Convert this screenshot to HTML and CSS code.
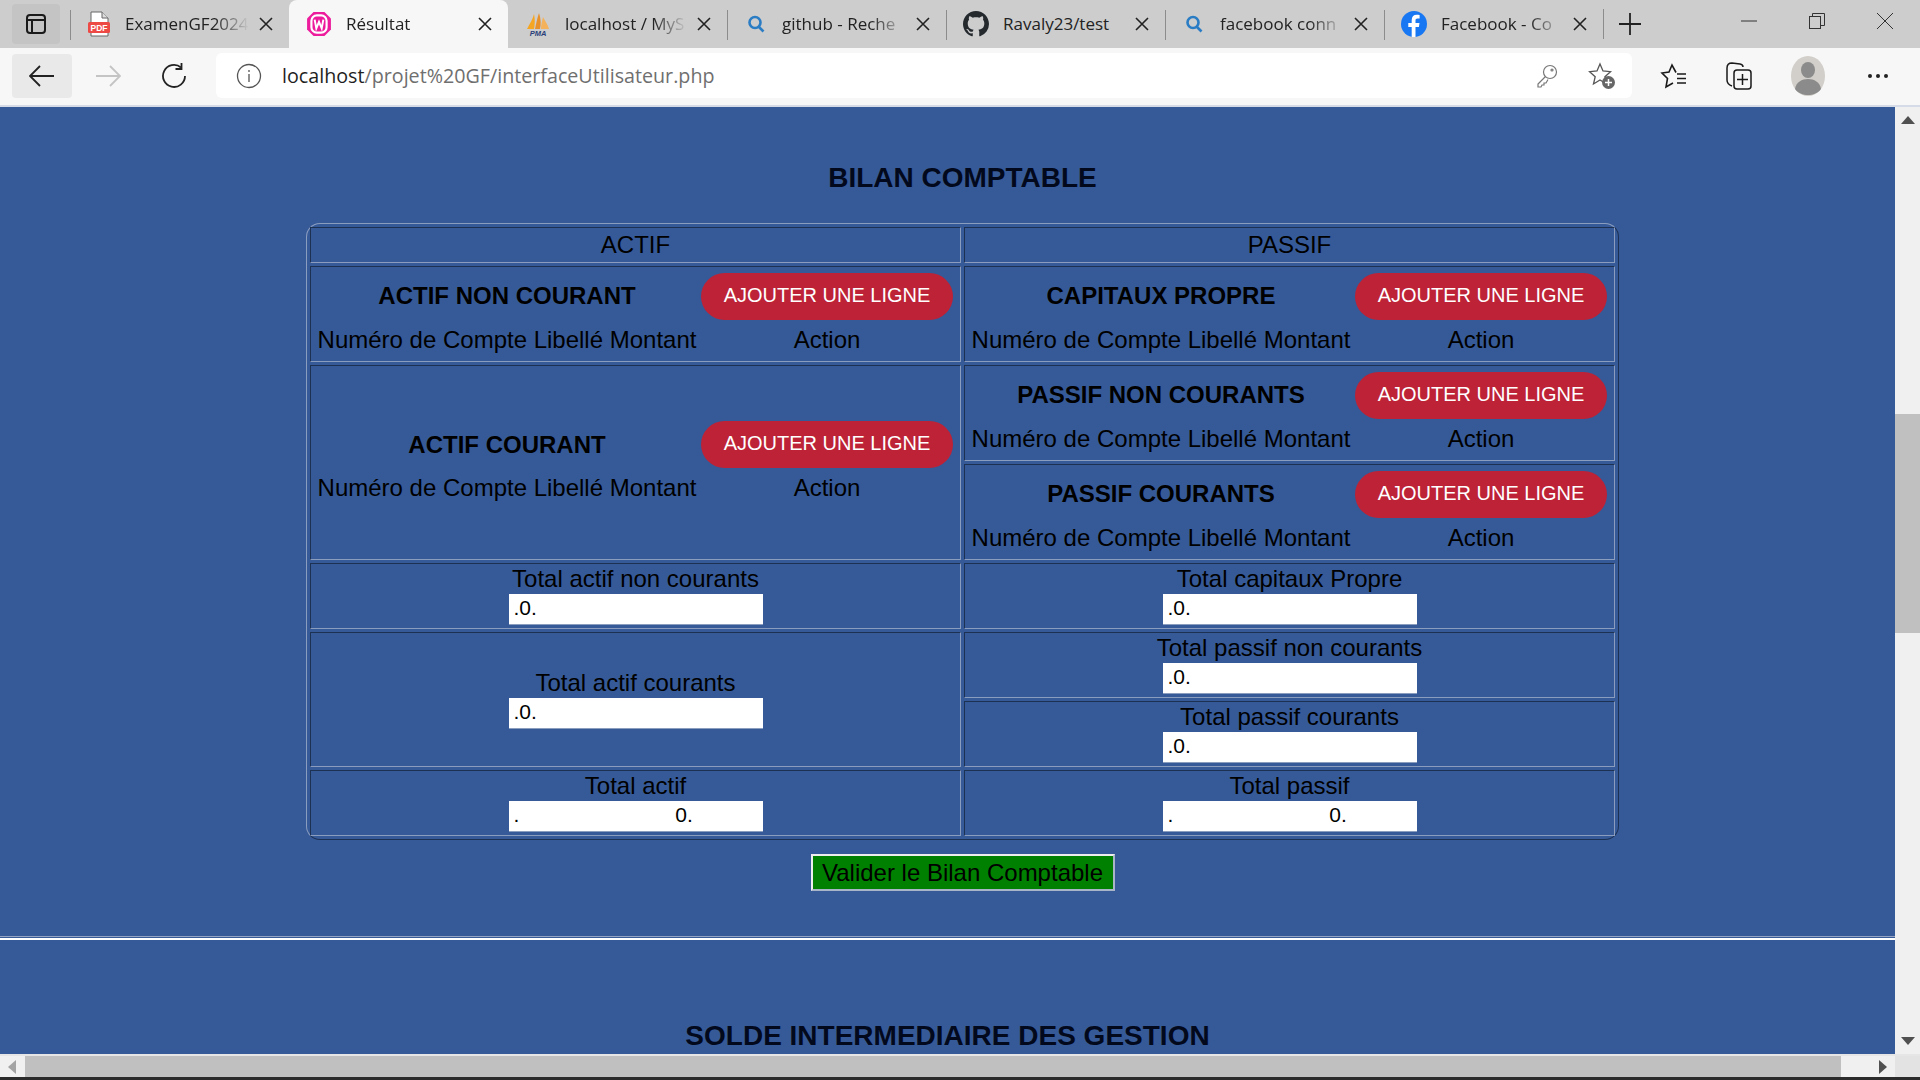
FILE: index.html
```html
<!DOCTYPE html>
<html lang="fr">
<head>
  <meta charset="UTF-8" />
  <title>Résultat</title>
  <link rel="stylesheet" href="styles.css">
</head>
<body>

  <!-- Tab strip -->
  <div class="tabstrip">
    <div class="side-btn">
      <svg width="24" height="24" viewBox="0 0 24 24" fill="none" stroke="#1a1a1a" stroke-width="2"><rect x="3" y="3" width="18" height="18" rx="3"/><path d="M3 8h18M8 8v13"/></svg>
    </div>
    <div class="tab sep">
      <svg class="fav" width="24" height="26" viewBox="0 0 24 26"><path d="M4 1h11l6 6v18H4z" fill="#fff" stroke="#666"/><path d="M15 1v6h6" fill="#ddd" stroke="#666"/><rect x="1" y="11" width="22" height="11" rx="1.5" fill="#ee4a45"/><text x="12" y="20" font-size="8.5" font-weight="700" fill="#fff" text-anchor="middle" font-family="Liberation Sans">PDF</text></svg>
      <span class="tab-title">ExamenGF2024</span>
      <svg class="close" width="14" height="14" viewBox="0 0 14 14" stroke="#222" stroke-width="1.6"><path d="M1 1l12 12M13 1L1 13"/></svg>
    </div>
    <div class="tab active">
      <svg class="fav" width="26" height="26" viewBox="0 0 24 24"><path d="M7 1h10l6 6v10l-6 6H7l-6-6V7z" fill="#ec1c9c"/><rect x="5" y="4" width="14" height="16" rx="5" fill="none" stroke="#fff" stroke-width="2"/><path d="M8 8l1.5 8L12 10l2.500 6L16 8" fill="none" stroke="#fff" stroke-width="1.800"/></svg>
      <span class="tab-title">Résultat</span>
      <svg class="close" width="14" height="14" viewBox="0 0 14 14" stroke="#222" stroke-width="1.6"><path d="M1 1l12 12M13 1L1 13"/></svg>
    </div>
    <div class="tab sep">
      <svg class="fav" width="26" height="26" viewBox="0 0 26 26"><path d="M2 18C5 12 8 8 9 3c1 5 1 10 0 15z" fill="#f5a623"/><path d="M10 18c1-5 2-10 4-16 2 6 2 11 1 16z" fill="#e8912a"/><path d="M16 18c0-4 1-8 2-12 2 4 5 8 6 12z" fill="#f3b25b"/><text x="13" y="25" font-size="7.500" font-weight="700" font-style="italic" fill="#2a3f7a" text-anchor="middle" font-family="Liberation Sans">PMA</text></svg>
      <span class="tab-title">localhost / MyS</span>
      <svg class="close" width="14" height="14" viewBox="0 0 14 14" stroke="#222" stroke-width="1.6"><path d="M1 1l12 12M13 1L1 13"/></svg>
    </div>
    <div class="tab sep">
      <svg class="fav" width="24" height="24" viewBox="0 0 24 24" fill="none" stroke="#2a7dc4" stroke-width="2.600"><circle cx="11" cy="10.500" r="5.500"/><path d="M15 15l4.500 4.500"/></svg>
      <span class="tab-title">github - Reche</span>
      <svg class="close" width="14" height="14" viewBox="0 0 14 14" stroke="#222" stroke-width="1.6"><path d="M1 1l12 12M13 1L1 13"/></svg>
    </div>
    <div class="tab sep">
      <svg class="fav" width="26" height="26" viewBox="0 0 16 16"><path fill="#24292e" d="M8 0C3.580 0 0 3.580 0 8c0 3.540 2.290 6.530 5.470 7.590.4.070.55-.17.55-.38 0-.19-.01-.82-.01-1.490-2.010.37-2.530-.49-2.690-.94-.09-.23-.48-.94-.82-1.130-.28-.15-.68-.52-.01-.53.63-.01 1.080.58 1.230.82.720 1.210 1.870.87 2.330.66.070-.52.280-.87.510-1.070-1.780-.2-3.640-.89-3.640-3.950 0-.87.310-1.590.82-2.150-.08-.2-.36-1.020.08-2.120 0 0 .67-.21 2.200.82.640-.18 1.320-.27 2-.27s1.360.09 2 .27c1.530-1.040 2.200-.82 2.200-.82.440 1.100.16 1.920.08 2.120.51.56.82 1.270.82 2.150 0 3.070-1.870 3.750-3.650 3.950.29.250.54.730.54 1.480 0 1.070-.01 1.930-.01 2.200 0 .21.150.46.550.38A8.010 8.010 0 0 0 16 8c0-4.420-3.580-8-8-8z"/></svg>
      <span class="tab-title no-fade">Ravaly23/test</span>
      <svg class="close" width="14" height="14" viewBox="0 0 14 14" stroke="#222" stroke-width="1.6"><path d="M1 1l12 12M13 1L1 13"/></svg>
    </div>
    <div class="tab sep">
      <svg class="fav" width="24" height="24" viewBox="0 0 24 24" fill="none" stroke="#2a7dc4" stroke-width="2.600"><circle cx="11" cy="10.500" r="5.500"/><path d="M15 15l4.500 4.500"/></svg>
      <span class="tab-title">facebook conn</span>
      <svg class="close" width="14" height="14" viewBox="0 0 14 14" stroke="#222" stroke-width="1.6"><path d="M1 1l12 12M13 1L1 13"/></svg>
    </div>
    <div class="tab sep">
      <svg class="fav" width="26" height="26" viewBox="0 0 26 26"><circle cx="13" cy="13" r="13" fill="#1877f2"/><path d="M14.500 26V16h3.400l.6-4h-4V9.500c0-1.200.5-2 2.100-2h2V4c-.9-.1-1.900-.2-2.900-.2-3 0-5 1.800-5 5.200v3H7.300v4h3.400v10z" fill="#fff"/></svg>
      <span class="tab-title">Facebook - Co</span>
      <svg class="close" width="14" height="14" viewBox="0 0 14 14" stroke="#222" stroke-width="1.6"><path d="M1 1l12 12M13 1L1 13"/></svg>
    </div>
    <div class="sep-last"></div>
    <svg class="new-tab" width="22" height="22" viewBox="0 0 22 22" stroke="#222" stroke-width="1.800"><path d="M11 0v22M0 11h22"/></svg>
    <div class="win-btns">
      <svg width="16" height="16" viewBox="0 0 16 16" stroke="#333" stroke-width="1"><path d="M0 8h16"/></svg>
      <svg width="16" height="16" viewBox="0 0 16 16" fill="none" stroke="#333" stroke-width="1"><rect x=".5" y="3.500" width="11" height="12"/><path d="M3.500 3.500V.5h12v12h-4"/></svg>
      <svg width="16" height="16" viewBox="0 0 16 16" stroke="#333" stroke-width="1"><path d="M0 0l16 16M16 0L0 16"/></svg>
    </div>
  </div>

  <!-- Address bar -->
  <div class="toolbar">
    <div class="nav-btn back">
      <svg width="26" height="24" viewBox="0 0 26 24" fill="none" stroke="#222" stroke-width="1.800"><path d="M1 12h24M11 2L1 12l10 10"/></svg>
    </div>
    <div class="nav-btn">
      <svg width="26" height="24" viewBox="0 0 26 24" fill="none" stroke="#c4c4c4" stroke-width="1.800"><path d="M25 12H1M15 2l10 10-10 10"/></svg>
    </div>
    <div class="nav-btn">
      <svg width="26" height="26" viewBox="0 0 26 26" fill="none" stroke="#222" stroke-width="1.800"><path d="M20 4.500A11 11 0 1 0 24 13"/><path d="M20.500 0v6h-6"/></svg>
    </div>
    <div class="omnibox">
      <svg width="26" height="26" viewBox="0 0 26 26" fill="none" stroke="#555" stroke-width="1.300"><circle cx="13" cy="13" r="11.500"/><path d="M13 11v8M13 7v2"/></svg>
      <div class="url"><span class="url-host">localhost</span>/projet%20GF/interfaceUtilisateur.php</div>
      <svg class="omni-key" width="22" height="24" viewBox="0 0 22 24" fill="none" stroke="#777" stroke-width="1.200"><circle cx="14" cy="8" r="6.500"/><path d="M9.500 12.500L2 20v3h3l1-2h2v-2h2l2-3.500"/><circle cx="16" cy="6" r="1"/></svg>
      <svg width="28" height="28" viewBox="0 0 28 28"><path d="M12 2l3 7 7.500.7-5.600 5 1.700 7.300L12 18l-6.500 4 1.700-7.300-5.600-5L9 9z" fill="none" stroke="#555" stroke-width="1.300"/><circle cx="20.500" cy="20.500" r="6.500" fill="#666"/><path d="M20.500 17v7M17 20.500h7" stroke="#fff" stroke-width="1.500"/></svg>
    </div>
    <div class="tool-icons">
      <svg width="28" height="28" viewBox="0 0 28 28" fill="none" stroke="#1a1a1a" stroke-width="1.600"><path d="M16 10.500L12 3L9 10L2 11L7.500 16.500L6 25L13 21"/><path d="M17 12h9M17 16.500h9M17 21h9"/></svg>
      <svg width="28" height="30" viewBox="0 0 28 30" fill="none" stroke="#1a1a1a" stroke-width="1.500"><path d="M7 25C4 24 2 22 2 19V7c0-3 2-5 5-5l8 1c2 .3 3 1.500 3 3"/><rect x="9" y="9" width="17" height="19" rx="3"/><path d="M17.500 13v11M12 18.500h11"/></svg>
      <svg class="avatar" width="34" height="40" viewBox="0 0 34 40"><ellipse cx="17" cy="20" rx="17" ry="20" fill="#d2cfca"/><ellipse cx="17" cy="14" rx="7" ry="8" fill="#8b8b8b"/><path d="M4 33c1-7 7-10 13-10s12 3 13 10c-3 4-8 6-13 6S7 37 4 33z" fill="#8b8b8b"/></svg>
      <svg width="22" height="6" viewBox="0 0 22 6" fill="#222"><circle cx="3" cy="3" r="2"/><circle cx="11" cy="3" r="2"/><circle cx="19" cy="3" r="2"/></svg>
    </div>
  </div>

  <!-- Page with its scrollbars -->
  <div class="window">
    <div class="viewport">
      <div class="bilan">
        <h2 class="bilan-title">BILAN COMPTABLE</h2>
        <table class="bilan-table">
          <tr class="row-head">
            <td>ACTIF</td>
            <td>PASSIF</td>
          </tr>
          <tr class="row-group">
            <td>
              <div class="group">
                <strong>ACTIF NON COURANT</strong>
                <a class="add-btn">AJOUTER UNE LIGNE</a>
                <span class="cols">Numéro de Compte Libellé Montant</span>
                <span class="cols">Action</span>
              </div>
            </td>
            <td>
              <div class="group">
                <strong>CAPITAUX PROPRE</strong>
                <a class="add-btn">AJOUTER UNE LIGNE</a>
                <span class="cols">Numéro de Compte Libellé Montant</span>
                <span class="cols">Action</span>
              </div>
            </td>
          </tr>
          <tr class="row-group">
            <td rowspan="2">
              <div class="group">
                <strong>ACTIF COURANT</strong>
                <a class="add-btn">AJOUTER UNE LIGNE</a>
                <span class="cols">Numéro de Compte Libellé Montant</span>
                <span class="cols">Action</span>
              </div>
            </td>
            <td>
              <div class="group">
                <strong>PASSIF NON COURANTS</strong>
                <a class="add-btn">AJOUTER UNE LIGNE</a>
                <span class="cols">Numéro de Compte Libellé Montant</span>
                <span class="cols">Action</span>
              </div>
            </td>
          </tr>
          <tr class="row-group">
            <td>
              <div class="group">
                <strong>PASSIF COURANTS</strong>
                <a class="add-btn">AJOUTER UNE LIGNE</a>
                <span class="cols">Numéro de Compte Libellé Montant</span>
                <span class="cols">Action</span>
              </div>
            </td>
          </tr>
          <tr class="row-total">
            <td>Total actif non courants<div class="amount">.0.</div></td>
            <td>Total capitaux Propre<div class="amount">.0.</div></td>
          </tr>
          <tr class="row-total">
            <td rowspan="2">Total actif courants<div class="amount">.0.</div></td>
            <td>Total passif non courants<div class="amount">.0.</div></td>
          </tr>
          <tr class="row-total">
            <td>Total passif courants<div class="amount">.0.</div></td>
          </tr>
          <tr class="row-total">
            <td>Total actif<div class="amount amount-split"><span>.</span><span>0.</span></div></td>
            <td>Total passif<div class="amount amount-split"><span>.</span><span>0.</span></div></td>
          </tr>
        </table>
        <div class="submit-row">
          <button class="submit-btn">Valider le Bilan Comptable</button>
        </div>
      </div>
      <hr class="divider">
      <h2 class="solde-title">SOLDE INTERMEDIAIRE DES GESTION</h2>
    </div>
    <div class="vscroll">
      <svg class="arrow-up" width="14" height="8" viewBox="0 0 14 8" fill="#505050"><path d="M7 0l7 8H0z"/></svg>
      <div class="vthumb"></div>
      <svg class="arrow-down" width="14" height="8" viewBox="0 0 14 8" fill="#505050"><path d="M7 8L0 0h14z"/></svg>
    </div>
  </div>
  <div class="hscroll">
    <svg width="8" height="14" viewBox="0 0 8 14" fill="#a3a3a3"><path d="M0 7l8-7v14z"/></svg>
    <div class="hthumb"></div>
    <svg width="8" height="14" viewBox="0 0 8 14" fill="#505050"><path d="M8 7L0 0v14z"/></svg>
    <div class="corner"></div>
  </div>
  <div class="desktop-edge"></div>

</body>
</html>
```

FILE: styles.css
```css
html, body {
  margin: 0;
  height: 100%;
  overflow: hidden;
}
body {
  display: flex;
  flex-direction: column;
  height: 1080px;
  font-family: "Liberation Sans", Arial, sans-serif;
  background: #365a98;
}

/* Tab strip */
.tabstrip {
  display: flex;
  align-items: center;
  height: 48px;
  flex: none;
  background: #cdcdcd;
  font-family: "Open Sans", "Noto Sans", sans-serif;
  font-size: 17px;
  color: #222;
}
.side-btn {
  display: flex;
  align-items: center;
  justify-content: center;
  width: 48px;
  height: 40px;
  margin-left: 12px;
  margin-right: 10px;
  background: #c4c4c4;
  border-radius: 4px;
}
.tab {
  display: flex;
  align-items: center;
  width: 219px;
  height: 48px;
  flex: none;
  box-sizing: border-box;
  padding-left: 17px;
  padding-right: 16px;
  position: relative;
}
.tab.sep::before, .sep-last {
  content: "";
  width: 1px;
  height: 30px;
  background: #8c8c8c;
}
.tab.sep::before {
  position: absolute;
  left: 0;
  top: 10px;
}
.tab.active + .tab.sep::before {
  display: none;
}
.tab.active {
  background: #f7f7f7;
  border-radius: 8px 8px 0 0;
}
.fav {
  flex: none;
}
.tab-title {
  flex: 1;
  min-width: 0;
  margin-left: 14px;
  margin-bottom: 2px;
  white-space: nowrap;
  -webkit-mask-image: linear-gradient(to right, #000 72%, transparent 100%);
  mask-image: linear-gradient(to right, #000 72%, transparent 100%);
}
.tab-title.no-fade {
  -webkit-mask-image: none;
  mask-image: none;
}
.close {
  flex: none;
  margin-left: 10px;
}
.sep-last {
  flex: none;
}
.new-tab {
  margin-left: 15px;
}
.win-btns {
  display: flex;
  gap: 52px;
  margin-left: auto;
  margin-right: 27px;
  margin-top: -6px;
}

/* Address bar */
.toolbar {
  display: flex;
  align-items: center;
  height: 59px;
  flex: none;
  box-sizing: border-box;
  padding: 1px 0 3px 12px;
  background: #f7f7f7;
  border-bottom: 2px solid #d5dbe7;
}
.nav-btn {
  display: flex;
  align-items: center;
  justify-content: center;
  width: 60px;
  height: 44px;
  margin-right: 6px;
}
.back {
  background: #e9e9e9;
  border-radius: 4px;
}
.omnibox {
  display: flex;
  align-items: center;
  gap: 20px;
  width: 1416px;
  height: 45px;
  margin-left: 6px;
  box-sizing: border-box;
  padding: 0 16px 0 20px;
  background: #fff;
  border-radius: 6px;
  flex: none;
}
.url {
  flex: 1;
  font-family: "Open Sans", "Noto Sans", sans-serif;
  font-size: 19.7px;
  color: #6f6f6f;
}
.url-host {
  color: #1f1f1f;
}
.omni-key {
  margin-right: 10px;
}
.tool-icons {
  display: flex;
  align-items: center;
  justify-content: space-between;
  flex: 1;
  padding: 0 31px 0 28px;
}
.avatar {
  margin-right: 5px;
}

/* Page area */
.viewport {
  flex: 1;
  min-width: 0;
  overflow: hidden;
  background: #365a98;
  color: #000;
}
.window {
  display: flex;
  flex: 1;
  min-height: 0;
}
.bilan {
  width: 1925px;
}
.bilan-title {
  margin: 0;
  padding-top: 56px;
  height: 60px;
  line-height: 30px;
  font-size: 28px;
  text-align: center;
}
.bilan-title, .solde-title {
  color: #03091c;
}
.bilan-table {
  width: 1313px;
  margin: 0 auto;
  border-collapse: separate;
  border-spacing: 3px;
  border: 1px solid;
  border-color: #8b9dbf #1d3153 #1d3153 #8b9dbf;
  border-radius: 14px;
  font-size: 24px;
  table-layout: fixed;
}
.bilan-table td {
  box-sizing: border-box;
  padding: 0;
  border: 1px solid;
  border-color: #1d3153 #8b9dbf #8b9dbf #1d3153;
  text-align: center;
  vertical-align: middle;
}
.row-head td {
  height: 36px;
}
.row-group td {
  height: 96px;
}
.row-total td {
  height: 66px;
  line-height: 23px;
}
.group {
  display: grid;
  grid-template-columns: 380px 252px;
  column-gap: 4px;
  row-gap: 2px;
  align-items: center;
  padding-top: 2px;
  padding-left: 6px;
  text-align: center;
  line-height: 36px;
}
.group strong {
  font-size: 24px;
}
.cols {
  font-size: 24px;
  white-space: nowrap;
}
.add-btn {
  display: block;
  height: 47px;
  line-height: 45px;
  background: #bd2236;
  border-radius: 24px;
  color: #fff;
  font-size: 20px;
}
.amount {
  width: 254px;
  height: 31px;
  margin: 4px auto 0;
  box-sizing: border-box;
  padding: 0 5px;
  background: #fff;
  border-bottom: 1px solid #8b9dbf;
  font-size: 21px;
  line-height: 28px;
  text-align: left;
}
.amount-split {
  display: flex;
  gap: 156px;
}
.submit-row {
  padding-top: 14px;
  text-align: center;
}
.submit-btn {
  width: 304px;
  height: 37px;
  padding: 0;
  background: #008000;
  border: 2px solid;
  border-color: #eeeeee #a8b4c8 #a8b4c8 #eeeeee;
  font-family: "Liberation Sans", Arial, sans-serif;
  font-size: 24px;
  color: #000;
}
.divider {
  margin: 45px 0 0;
  height: 1px;
  border: none;
  border-top: 1px solid #94a4c2;
  border-bottom: 2px solid #fff;
}
.solde-title {
  margin: 81px 0 0;
  line-height: 30px;
  font-size: 28px;
  text-align: center;
}

/* Scrollbars */
.vscroll {
  display: flex;
  flex-direction: column;
  align-items: center;
  width: 25px;
  flex: none;
  background: #f0f0f0;
}
.arrow-up {
  margin-top: 9px;
}
.vthumb {
  width: 100%;
  height: 219px;
  margin-top: 290px;
  background: #c0c0c0;
}
.arrow-down {
  margin-top: auto;
  margin-bottom: 9px;
}
.hscroll {
  display: flex;
  align-items: center;
  height: 23px;
  flex: none;
  background: #f0f0f0;
  border-top: 2px solid #e6e6e6;
  box-sizing: border-box;
  padding-left: 8px;
}
.hthumb {
  width: 1816px;
  height: 100%;
  margin: 0 38px 0 9px;
  background: #c0c0c0;
}
.corner {
  width: 25px;
  height: 100%;
  margin-left: 8px;
  background: #e3e3e3;
}
.desktop-edge {
  height: 3px;
  flex: none;
  background: #2b2b2b;
}
```
